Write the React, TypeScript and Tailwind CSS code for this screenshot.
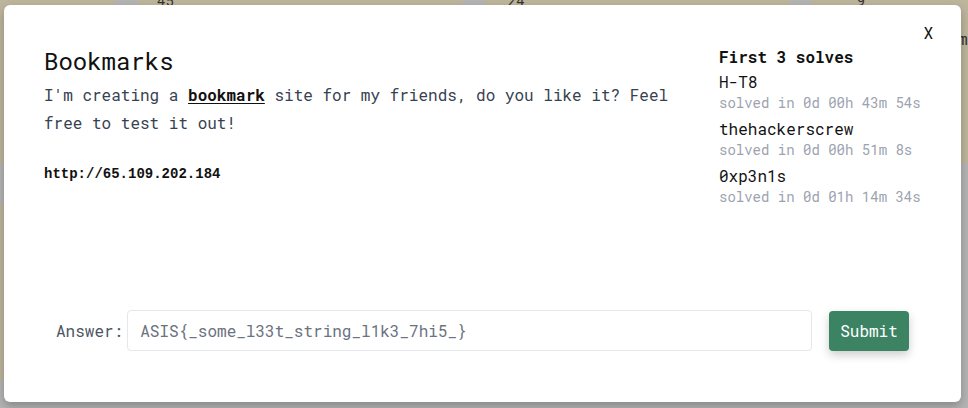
const mono = { fontFamily: '"Roboto Mono", "Liberation Mono", monospace' };

const solves = [
  { name: "H-T8", time: "solved in 0d 00h 43m 54s" },
  { name: "thehackerscrew", time: "solved in 0d 00h 51m 8s" },
  { name: "0xp3n1s", time: "solved in 0d 01h 14m 34s" },
];

function Backdrop() {
  return (
    <div className="absolute inset-0 bg-[#b4b4b4]">
      <div className="h-[164px] bg-[#bdb59c]">
        <div className="flex h-[5px] items-start text-[#333] text-sm" style={mono}>
          <div className="ml-[115px] h-[5px] w-[23px] bg-[#b4b4b4]" />
          <span className="ml-[19px] leading-[10px] -mt-[4px]">45</span>
          <div className="ml-[289px] h-[5px] w-[22px] bg-[#b4b4b4]" />
          <span className="ml-[23px] leading-[10px] -mt-[4px]">24</span>
          <div className="ml-[265px] h-[5px] w-[22px] bg-[#b4b4b4]" />
          <span className="ml-[45px] leading-[10px] -mt-[4px]">9</span>
        </div>
        <div className="ml-[958px] mt-[22px] text-[#333] text-base" style={mono}>m</div>
      </div>
      <div className="mt-[40px] h-[176px] w-[940px] bg-[#bdb59c]" />
    </div>
  );
}

export default function App() {
  return (
    <div className="relative h-[408px] w-[968px] overflow-hidden">
      <Backdrop />
      <div
        className="absolute left-[4px] top-[5px] flex h-[397px] w-[957px] flex-col rounded-md bg-white shadow-[0_4px_10px_rgba(0,0,0,0.25)]"
        style={mono}
      >
        <button className="absolute right-[28px] top-[16px] text-base leading-6 text-[#111]">X</button>
        <div className="flex flex-1 pl-[40px] pt-[40px]">
          <div className="w-[645px]">
            <h2 className="text-2xl leading-8 text-[#111]">Bookmarks</h2>
            <p className="mt-[4px] text-base leading-[28px] text-[#374151]">
              I'm creating a <a className="font-bold text-[#111] underline underline-offset-2">bookmark</a> site for my friends, do you like it? Feel free to test it out!
            </p>
            <p className="mt-[27px] text-sm font-bold leading-5 text-[#111]" style={{ fontFamily: '"Liberation Mono", monospace' }}>
              http://65.109.202.184
            </p>
          </div>
          <div className="ml-[30px] w-[210px]">
            <h3 className="text-base font-bold leading-6 text-[#111]">First 3 solves</h3>
            <div className="flex flex-col gap-[4px] pt-[1px]">
              {solves.map((s) => (
                <div key={s.name}>
                  <div className="text-base leading-6 text-[#111]">{s.name}</div>
                  <div className="-mt-px text-sm leading-5 text-[#9ca3af]">{s.time}</div>
                </div>
              ))}
            </div>
          </div>
        </div>
        <div className="flex items-center px-[52px] pb-[51px]">
          <label className="mr-[4px] text-base text-[#4b5563]">Answer:</label>
          <input
            className="h-[41px] flex-1 rounded border border-[#e5e7eb] px-3 text-base text-[#111] outline-none placeholder:text-[#6b7280]"
            style={mono}
            placeholder="ASIS{_some_l33t_string_l1k3_7hi5_}"
          />
          <button
            className="ml-[17px] h-[40px] w-[80px] rounded bg-[#3c8363] text-base text-white shadow-[0_4px_10px_rgba(0,0,0,0.2)]"
            style={mono}
          >
            Submit
          </button>
        </div>
      </div>
    </div>
  );
}
